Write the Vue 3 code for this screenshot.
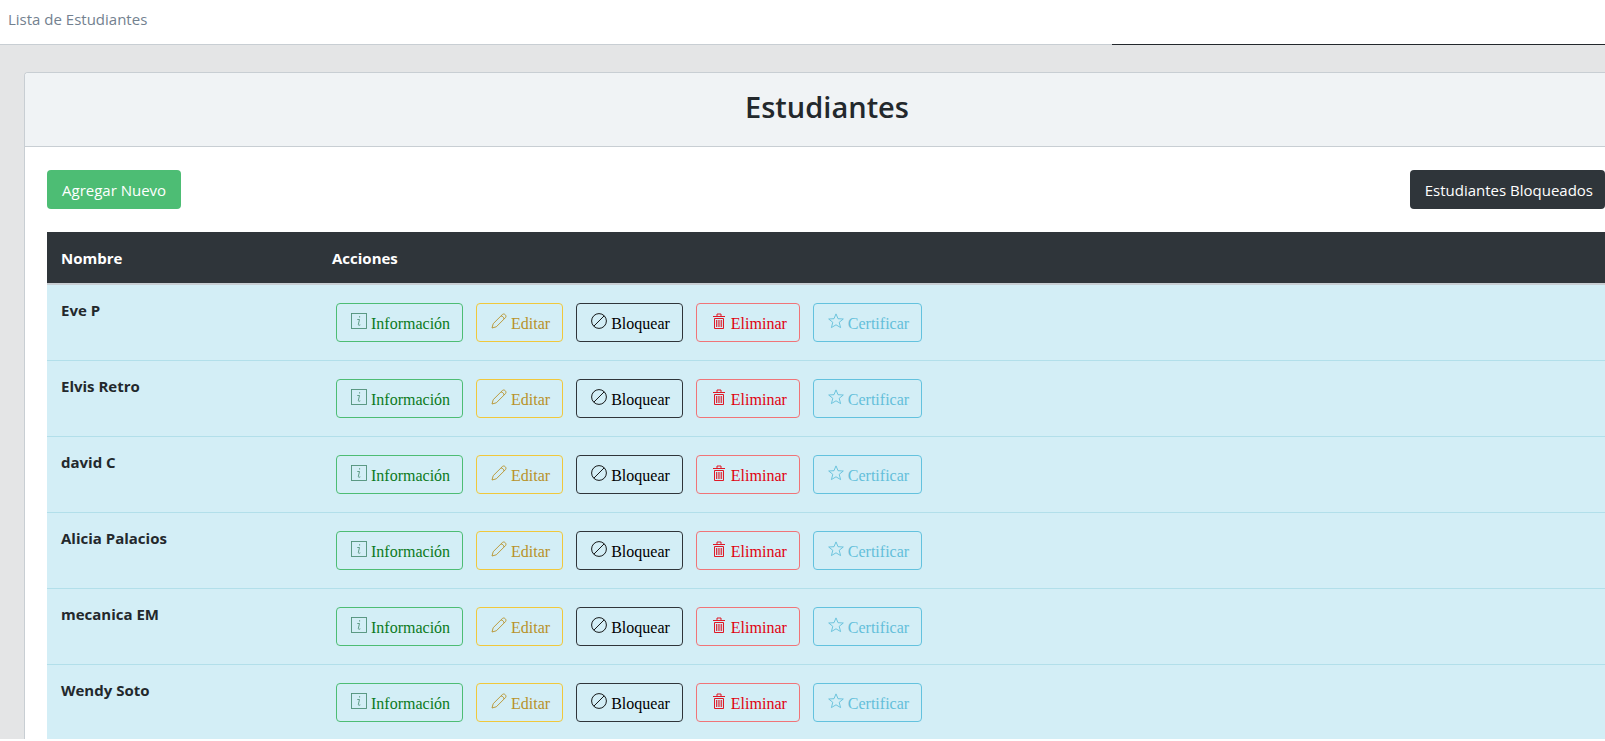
<script setup>
const students = ['Eve P', 'Elvis Retro', 'david C', 'Alicia Palacios', 'mecanica EM', 'Wendy Soto']

const actions = [
  { key: 'info', label: 'Información' },
  { key: 'edit', label: 'Editar' },
  { key: 'block', label: 'Bloquear' },
  { key: 'remove', label: 'Eliminar' },
  { key: 'certify', label: 'Certificar' },
]
</script>

<template>
  <div class="page">
    <header class="topbar">
      <span class="crumb">Lista de Estudiantes</span>
      <span class="topbar-line"></span>
    </header>

    <main class="content">
      <section class="card">
        <div class="card-header">
          <h1>Estudiantes</h1>
        </div>
        <div class="card-body">
          <div class="toolbar">
            <button type="button" class="btn add">Agregar Nuevo</button>
            <button type="button" class="btn blocked">Estudiantes Bloqueados</button>
          </div>

          <table class="table">
            <thead>
              <tr>
                <th scope="col" class="name-col">Nombre</th>
                <th scope="col">Acciones</th>
              </tr>
            </thead>
            <tbody>
              <tr v-for="name in students" :key="name">
                <th scope="row">{{ name }}</th>
                <td>
                  <div class="actions">
                    <button v-for="a in actions" :key="a.key" type="button" class="action" :class="a.key">
                      <svg class="icon" viewBox="0 0 16 16" aria-hidden="true">
                        <g v-if="a.key === 'info'">
                          <rect x="0.5" y="0.5" width="15" height="15" />
                          <path d="M6.300 6.500h2.200L7.400 11.200c-.2 1.200.4 1.400 1.900.6M8.600 3.200v1.300" />
                        </g>
                        <g v-else-if="a.key === 'edit'">
                          <path d="M1 15l1.200-4.300L11.400 1.500c1.800-1.700 4.700 1.200 3.100 3.100L5.300 13.800zM10 2.900c1.700.3 2.800 1.400 3.100 3.100" />
                        </g>
                        <g v-else-if="a.key === 'block'">
                          <circle cx="8" cy="8" r="7.400" />
                          <path d="M2.800 13.200L13.200 2.800" />
                        </g>
                        <g v-else-if="a.key === 'remove'">
                          <path d="M2 3.500h12M6 3.300V1h4v2.300M3.500 5.500v10h9v-10z" />
                          <path class="slats" d="M5.500 7v7M7.200 7v7M8.900 7v7M10.600 7v7" />
                        </g>
                        <g v-else>
                          <path d="M8 .9l2 4.800 5.300.3-4.100 3.300 1.400 5.300L8 11.800l-4.600 2.800 1.400-5.300L.7 6 6 5.700z" />
                        </g>
                      </svg>
                      <span>{{ a.label }}</span>
                    </button>
                  </div>
                </td>
              </tr>
            </tbody>
          </table>
        </div>
      </section>
    </main>
  </div>
</template>

<style>
body {
  margin: 0;
  overflow: hidden;
  background: #fff;
}
</style>

<style scoped>
.page {
  height: calc(100vh - 2px);
  overflow: hidden;
  background: #e4e5e6;
  font-family: "Open Sans", "Noto Sans", sans-serif;
  font-size: 15px;
  line-height: 24px;
  color: #23282c;
}
.topbar {
  position: relative;
  box-sizing: border-box;
  height: 45px;
  padding: 7px 8px;
  background: #fff;
  border-bottom: 1px solid #c8ced3;
}
.crumb {
  display: block;
  color: #73818f;
}
.topbar-line {
  position: absolute;
  right: 0;
  bottom: -1px;
  left: 1112px;
  height: 1px;
  background: #23282c;
}
.content {
  padding: 27px 0 0 24px;
}
.card {
  background: #fff;
  border: 1px solid #c8ced3;
  border-right: 0;
  border-top-left-radius: 4px;
  overflow: hidden;
}
.card-header {
  padding: 14px 0 20px;
  background: #f0f3f5;
  border-bottom: 1px solid #c8ced3;
  text-align: center;
}
h1 {
  margin: 0 0 0 24px;
  font-size: 29px;
  line-height: 39px;
  font-weight: 600;
}
.card-body {
  padding: 23px 0 24px 22px;
}
.toolbar {
  display: flex;
  justify-content: space-between;
  margin-bottom: 23px;
}
.btn {
  height: 39px;
  padding: 0 15px;
  border: 0;
  border-radius: 4px;
  color: #fff;
  font: inherit;
}
.add {
  background: #4dbd74;
}
.blocked {
  padding-right: 12px;
  background: #2f353a;
}
.table {
  width: 100%;
  border-collapse: separate;
  border-spacing: 0;
}
.table th,
.table td {
  padding: 13px 14px;
  text-align: left;
  vertical-align: top;
}
.table thead th {
  padding-top: 14px;
  color: #fff;
  background: #2f353a;
  border-bottom: 2px solid #c8ced3;
}
.name-col {
  width: 243px;
}
tbody th,
tbody td {
  background: #d3eef6;
  border-bottom: 1px solid #b2dfea;
}
.table tbody td {
  padding: 18px;
}
.actions {
  display: flex;
  gap: 13px;
}
.action {
  display: flex;
  align-items: center;
  gap: 4px;
  height: 39px;
  padding: 0 12px 0 14px;
  border: 1px solid;
  border-radius: 4px;
  background: transparent;
  font: 16px/24px "Liberation Serif", serif;
}
.icon {
  width: 16px;
  height: 16px;
  margin-bottom: 4px;
  fill: none;
  stroke: currentColor;
  stroke-width: 0.9;
}
.slats {
  stroke-width: 0.8;
}
.action span {
  padding-top: 3px;
}
.info {
  color: #0b7a1c;
  border-color: #4dbd74;
}
.info .icon {
  stroke: #4f9078;
}
.edit {
  color: #b8922a;
  border-color: #f0c83c;
}
.block {
  color: #000;
  border-color: #2f353a;
}
.remove {
  color: #e00010;
  border-color: #f07478;
}
.certify {
  color: #63bfda;
  border-color: #63c2de;
}
</style>
